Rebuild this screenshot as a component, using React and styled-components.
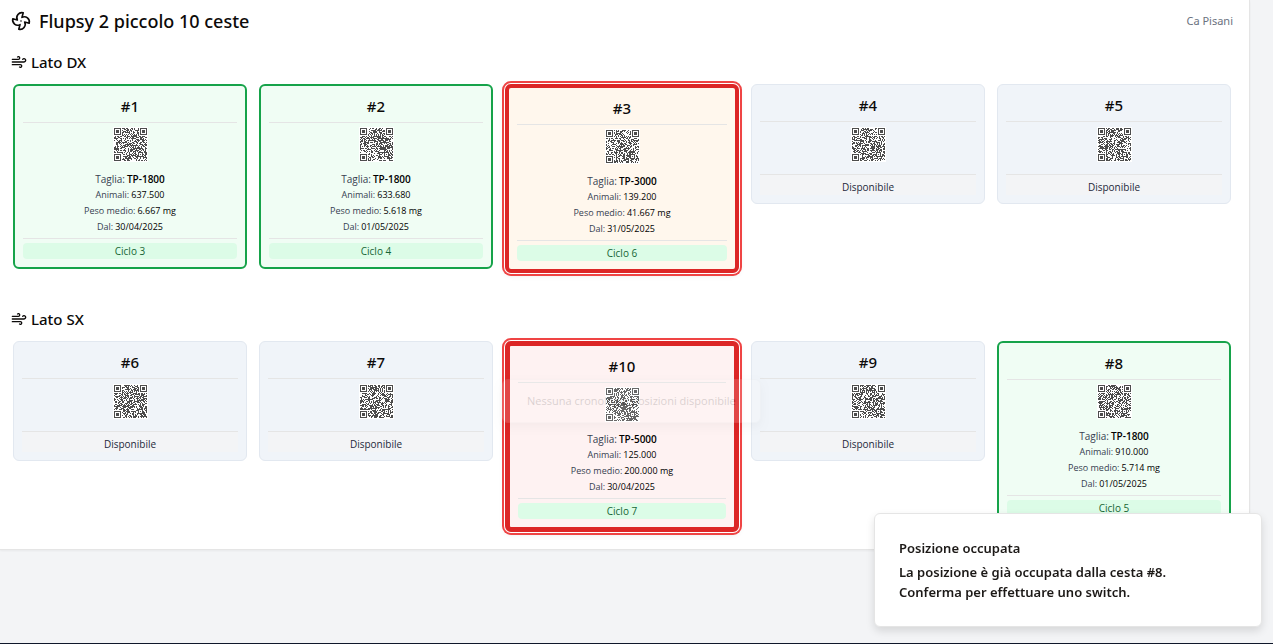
import React from "react";
import styled, { createGlobalStyle, css } from "styled-components";
import { Fan, Wind } from "lucide-react";

const GlobalStyle = createGlobalStyle`
  *, *::before, *::after { box-sizing: border-box; }
  body {
    margin: 0;
    background: #f3f4f6;
    color: #0c0a09;
    font-family: "Noto Sans", "Open Sans", sans-serif;
  }
  h1, h2, h3, p, dl, dd { margin: 0; }
`;

const Page = styled.div`
  min-height: 100vh;
  padding-right: 23px;
  border-bottom: 1px solid #0f172a;
  overflow: hidden;
`;

const Panel = styled.main`
  padding: 7px 16px 17px 11px;
  background: #fff;
  border: solid #e5e5e5;
  border-width: 0 1px 1px 0;
  box-shadow: 0 1px 2px rgba(0, 0, 0, 0.05);
`;

const PanelHeader = styled.header`
  display: flex;
  align-items: center;
  justify-content: space-between;
`;

const Title = styled.h1`
  display: flex;
  align-items: center;
  gap: 8px;
  font-size: 18px;
  line-height: 28px;
  font-weight: 500;
`;

const Place = styled.span`
  font-size: 11px;
  line-height: 16px;
  color: #6b7280;
`;

const Side = styled.section`
  margin-top: ${(p) => (p.$first ? "13px" : "32px")};
`;

const SideTitle = styled.h2`
  display: flex;
  align-items: center;
  gap: 4px;
  margin-bottom: 8px;
  font-size: 15px;
  line-height: 28px;
  font-weight: 500;
`;

const Grid = styled.div`
  display: grid;
  grid-template-columns: repeat(5, minmax(0, 1fr));
  align-items: start;
  gap: 12px;
  padding: 0 2px;
`;

const tones = {
  green: css`background: #f0fdf4; border: 2px solid #16a34a;`,
  empty: css`background: #f0f4f9; border: 1px solid #e2e8f0;`,
  orange: css`background: #fff7ed; border: 4px solid #dc2626;`,
  red: css`background: #fef2f2; border: 5px solid #dc2626;`,
};

const Card = styled.article`
  position: relative;
  padding: 8px;
  border-radius: 6px;
  text-align: center;
  font-family: "Open Sans", "Noto Sans", sans-serif;
  ${(p) => tones[p.$tone]}
  ${(p) => p.$selected && css`
    box-shadow: 0 0 0 1px #fff, 0 0 0 3px #ef4444, 0 2px 6px rgba(0, 0, 0, 0.1);
  `}
`;

const CardTitle = styled.h3`
  padding-bottom: 4px;
  border-bottom: 1px solid #e5e5e5;
  font-family: "Noto Sans", "Open Sans", sans-serif;
  font-size: 15px;
  line-height: 24px;
  font-weight: 500;
`;

const CodeBox = styled.div`
  display: flex;
  justify-content: center;
  padding: ${(p) => (p.$empty ? "5px 0 12px" : "4px 0 9px")};
`;

const CodeSvg = styled.svg`
  display: block;
  width: 35px;
  height: 35px;
  background: #fff;
`;

const Details = styled.dl`
  padding-bottom: 3px;
  line-height: 16px;
`;

const Detail = styled.div`
  display: flex;
  justify-content: center;
  gap: 2px;
  height: 16px;
  font-size: ${(p) => (p.$strong ? "10px" : "9px")};
  dt { color: #374151; }
  dd { font-weight: ${(p) => (p.$strong ? 600 : 400)}; color: #000; }
`;

const Footer = styled.div`
  padding-top: 4px;
  border-top: 1px solid #e5e5e5;
  font-size: 10px;
  line-height: 16px;
  ${(p) => p.$empty && css`background: #f3f4f6; color: #1e293b;`}
`;

const Cycle = styled.div`
  border-radius: 4px;
  background: #dcfce7;
  color: #166534;
`;

const Tooltip = styled.div`
  position: absolute;
  top: 33px;
  left: -8px;
  padding: 11px 24px;
  border: 1px solid #e5e5e5;
  border-radius: 6px;
  background: #fff;
  box-shadow: 0 4px 8px rgba(0, 0, 0, 0.2);
  font-size: 11px;
  line-height: 20px;
  white-space: nowrap;
  opacity: 0.15;
  z-index: 1;
`;

const Toast = styled.aside`
  position: fixed;
  right: 11px;
  bottom: 17px;
  width: 388px;
  max-width: calc(100vw - 22px);
  padding: 24px;
  border: 1px solid #e5e5e5;
  border-radius: 6px;
  background: #fff;
  box-shadow: 0 4px 8px rgba(0, 0, 0, 0.12);
  font-size: 13px;
  line-height: 20px;
  font-weight: 600;
  color: #1c1917;
  z-index: 2;
`;

const ToastTitle = styled.p`
  margin-bottom: 4px;
`;

const SIZE = 33;

function finder(x, y) {
  const d = Math.max(Math.abs(x - 3), Math.abs(y - 3));
  return d === 3 || d <= 1;
}

function moduleOn(x, y, next) {
  const noise = next();
  if (x < 8 && y < 8) return x < 7 && y < 7 && finder(x, y);
  if (x > SIZE - 9 && y < 8) return x > SIZE - 8 && y < 7 && finder(x - SIZE + 7, y);
  if (x < 8 && y > SIZE - 9) return x < 7 && y > SIZE - 8 && finder(x, y - SIZE + 7);
  const a = Math.max(Math.abs(x - 26), Math.abs(y - 26));
  if (a <= 2) return a !== 1;
  if (x === 6 || y === 6) return (x + y) % 2 === 0;
  return noise > 0.47;
}

function codePath(seed) {
  let s = seed * 7919 + 17;
  const next = () => {
    s = (Math.imul(s, 1664525) + 1013904223) >>> 0;
    return s / 4294967296;
  };
  let d = "";
  for (let y = 0; y < SIZE; y++) {
    for (let x = 0; x < SIZE; x++) {
      if (moduleOn(x, y, next)) d += `M${x + 1} ${y + 1}h1v1h-1z`;
    }
  }
  return d;
}

function Code({ id }) {
  return (
    <CodeSvg viewBox="0 0 35 35" shapeRendering="crispEdges" role="img" aria-label={`QR cesta ${id}`}>
      <path d={codePath(id)} fill="#4c4c4c" />
    </CodeSvg>
  );
}

function Basket({ id, tone = "empty", selected, size, animals, weight, since, cycle, tip }) {
  const empty = tone === "empty";
  return (
    <Card $tone={tone} $selected={selected}>
      <CardTitle>#{id}</CardTitle>
      <CodeBox $empty={empty}><Code id={id} /></CodeBox>
      {!empty && (
        <Details>
          <Detail $strong><dt>Taglia:</dt><dd>{size}</dd></Detail>
          <Detail><dt>Animali:</dt><dd>{animals}</dd></Detail>
          <Detail><dt>Peso medio:</dt><dd>{weight} mg</dd></Detail>
          <Detail><dt>Dal:</dt><dd>{since}</dd></Detail>
        </Details>
      )}
      <Footer $empty={empty}>
        {empty ? "Disponibile" : <Cycle>Ciclo {cycle}</Cycle>}
      </Footer>
      {tip && <Tooltip role="tooltip">{tip}</Tooltip>}
    </Card>
  );
}

const right = [
  { id: 1, tone: "green", size: "TP-1800", animals: "637.500", weight: "6.667", since: "30/04/2025", cycle: 3 },
  { id: 2, tone: "green", size: "TP-1800", animals: "633.680", weight: "5.618", since: "01/05/2025", cycle: 4 },
  { id: 3, tone: "orange", selected: true, size: "TP-3000", animals: "139.200", weight: "41.667", since: "31/05/2025", cycle: 6 },
  { id: 4 },
  { id: 5 },
];

const left = [
  { id: 6 },
  { id: 7 },
  { id: 10, tone: "red", selected: true, size: "TP-5000", animals: "125.000", weight: "200.000", since: "30/04/2025", cycle: 7, tip: "Nessuna cronologia posizioni disponibile" },
  { id: 9 },
  { id: 8, tone: "green", size: "TP-1800", animals: "910.000", weight: "5.714", since: "01/05/2025", cycle: 5 },
];

function Row({ name, baskets, first }) {
  return (
    <Side $first={first}>
      <SideTitle><Wind size={16} aria-hidden="true" />{name}</SideTitle>
      <Grid>{baskets.map((b) => <Basket key={b.id} {...b} />)}</Grid>
    </Side>
  );
}

export default function App() {
  return (
    <>
      <GlobalStyle />
      <Page>
        <Panel>
          <PanelHeader>
            <Title><Fan size={20} aria-hidden="true" />Flupsy 2 piccolo 10 ceste</Title>
            <Place>Ca Pisani</Place>
          </PanelHeader>
          <Row name="Lato DX" baskets={right} first />
          <Row name="Lato SX" baskets={left} />
        </Panel>
      </Page>
      <Toast role="status">
        <ToastTitle>Posizione occupata</ToastTitle>
        <p>La posizione è già occupata dalla cesta #8.</p>
        <p>Conferma per effettuare uno switch.</p>
      </Toast>
    </>
  );
}
